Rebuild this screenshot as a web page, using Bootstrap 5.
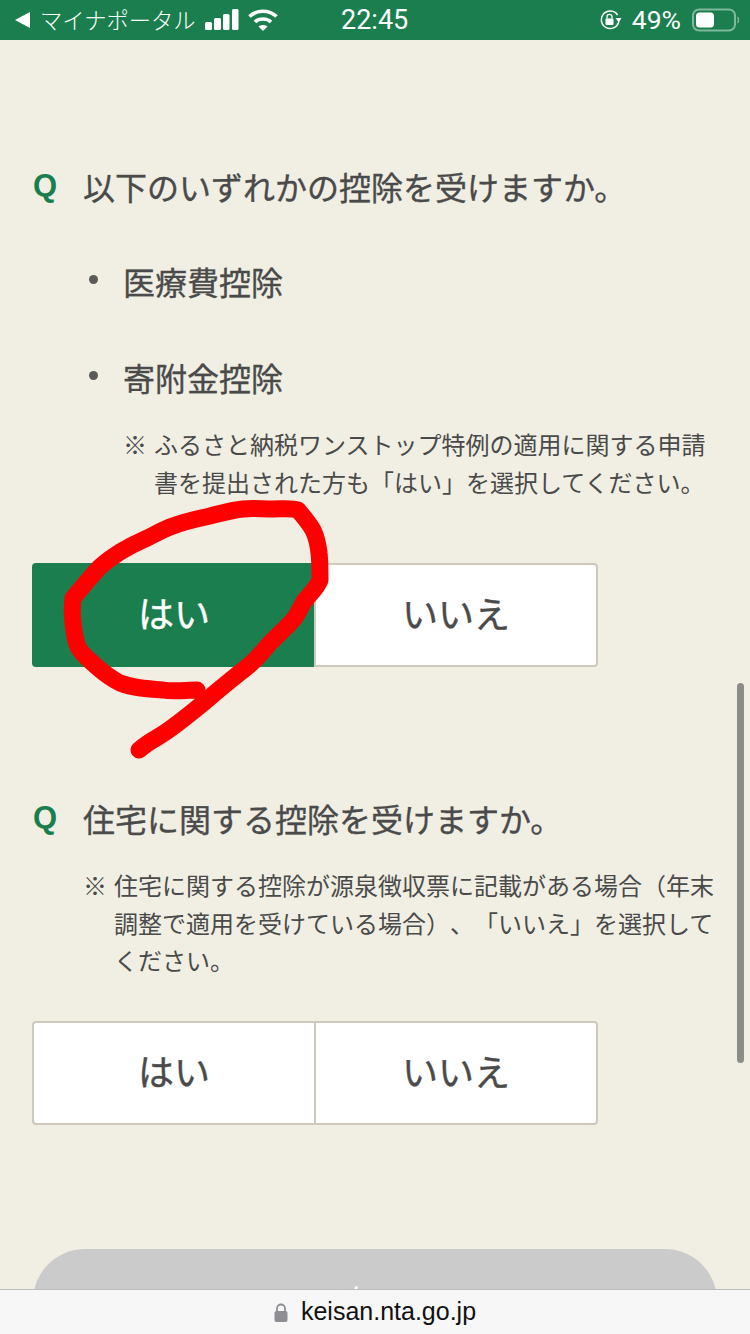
<!DOCTYPE html>
<html lang="ja">
<head>
<meta charset="utf-8">
<title>keisan.nta.go.jp</title>
<link href="https://cdn.jsdelivr.net/npm/bootstrap@5.3.0/dist/css/bootstrap.min.css" rel="stylesheet">
<style>
html,body{margin:0;padding:0}
body{width:750px;height:1334px;overflow:hidden;background:#f1efe3;font-family:"Noto Sans CJK JP","Liberation Sans",sans-serif;color:#4a4a4a;text-spacing-trim:space-all;font-feature-settings:"chws" 0,"palt" 0}
.screen{width:750px;height:1334px;overflow:hidden}
.statusbar{height:40px;background:#1a7e4e;color:#fff;font-family:Roboto,"Liberation Sans",sans-serif;flex:none}
.st-left{width:341px;padding-left:15px;font-size:22.300px;gap:9px;font-family:"Noto Sans CJK JP",sans-serif;font-weight:300}
.st-time{width:68px;font-size:27px;font-weight:400;white-space:nowrap;line-height:1}
.st-right{flex:1;font-size:26.500px;padding-right:10px;line-height:1}
.st-right .pct{margin:0 3px 0 2px}
.main{flex:1;min-height:0;padding:0 32px;overflow:hidden}
.q-line{margin:123px 0 0;font-size:32px;line-height:46px;font-weight:400;-webkit-text-stroke:.35px #4a4a4a;white-space:nowrap}
.q-mark{font-family:"Liberation Sans",sans-serif;font-weight:700;color:#1a7e4e;width:51px;font-size:31px;flex:none;padding-left:1px;-webkit-text-stroke:0}
.bul-list{list-style:none;margin:0;padding:0 0 0 91px;font-size:32px;line-height:46px;font-weight:400;-webkit-text-stroke:.35px #4a4a4a}
.bul-list li{position:relative;margin-top:50px}
.bul-list li:first-child{margin-top:49px}
.bul-list li::before{content:"";position:absolute;left:-34px;top:17px;width:9px;height:9px;border-radius:50%;background:#5a5a5a}
.note{font-size:24px;line-height:37.500px;display:flex;font-weight:400}
.note-a{padding-left:91px;margin:25px 0 0 0}
.note-b{padding-left:51px;margin:25px 0 0 0}
.note-k{width:31px;flex:none}
.yesno{width:566px;height:104px}
.yn-btn{height:104px;border:2px solid #cfc9bd;background:#fff;color:#4a4a4a;font-size:36px;font-weight:400;-webkit-text-stroke:.4px #4a4a4a;border-radius:0;padding:0 0 6px;line-height:1}
.yn-btn:first-child{border-radius:4px 0 0 4px;border-right-width:0;flex:0 0 282px}
.yn-btn:last-child{border-radius:0 4px 4px 0;flex:0 0 284px}
.yn-btn.on{background:#1a7e4e;border-color:#1a7e4e;color:#fff;-webkit-text-stroke:.4px #fff}
.yn-a{margin-top:63px}
.q-b{margin-top:128px}
.yn-b{margin-top:42px}
.next{height:120px;margin:124px 0 0 1px;width:684px;background:#cbcbcb;border-radius:52px;color:#fff;font-size:36px;text-align:center;line-height:104px}
.addr{height:45px;flex:none;background:#f7f7f7;border-top:1px solid #bdbdbd;color:#111;font-family:"Liberation Sans",sans-serif;font-size:25px;gap:13px;position:relative}
.scrollthumb{position:absolute;left:737px;top:683px;width:7px;height:380px;border-radius:4px;background:#8c8c88}
.scribble{position:absolute;left:0;top:0;pointer-events:none}
</style>
</head>
<body>
<div class="screen d-flex flex-column position-relative">
  <div class="statusbar d-flex align-items-center">
    <div class="st-left d-flex align-items-center">
      <svg width="16" height="16" viewBox="0 0 16 16"><path d="M0 8 15 0V16Z" fill="#fff"/></svg>
      <span>マイナポータル</span>
      <svg width="34" height="22" viewBox="0 0 34 22" fill="#fff"><rect x="0" y="13" width="7" height="8" rx="1.500"/><rect x="9" y="9" width="7" height="12" rx="1.500"/><rect x="18" y="5" width="6.500" height="16" rx="1.500"/><rect x="27" y="0" width="6.500" height="21" rx="1.500"/></svg>
      <svg width="30" height="22" viewBox="0 0 30 22" fill="none" stroke="#fff" stroke-width="3.600" stroke-linecap="butt"><path d="M1.500 7.500C9 .5 21 .5 28.500 7.500"/><path d="M7 13C11 9 19 9 23 13"/><path d="M15 22 10.500 17.500C13 15.500 17 15.500 19.500 17.500Z" fill="#fff" stroke="none"/></svg>
    </div>
    <div class="st-time">22:45</div>
    <div class="st-right d-flex align-items-center justify-content-end gap-2">
      <svg width="22" height="20" viewBox="0 0 22 20" fill="none"><path d="M17.600 5A8.800 8.800 0 1 0 18.800 11.500" stroke="#fff" stroke-width="1.500"/><path d="M15.500 8 21.500 8 18.800 12.500Z" fill="#fff"/><rect x="5.500" y="8.500" width="8" height="6.500" rx="1" fill="#fff"/><path d="M7 8.500V6.800A2.500 2.500 0 0 1 12 6.800V8.500" stroke="#fff" stroke-width="1.300"/></svg>
      <span class="pct">49%</span>
      <svg width="48" height="24" viewBox="0 0 48 24" fill="none"><rect x="1" y="1.500" width="42" height="21" rx="6" stroke="#7fb89c" stroke-width="2"/><rect x="4" y="4.500" width="18" height="15" rx="3.500" fill="#fff"/><path d="M45.500 9C46.800 10 46.800 14 45.500 15" stroke="#7fb89c" stroke-width="1.500"/></svg>
    </div>
  </div>

  <div class="main">
    <div class="q-line d-flex"><span class="q-mark">Q</span><span>以下のいずれかの控除を受けますか。</span></div>
    <ul class="bul-list">
      <li>医療費控除</li>
      <li>寄附金控除</li>
    </ul>
    <div class="note note-a"><span class="note-k">※</span><span>ふるさと納税ワンストップ特例の適用に関する申請書を提出された方も「はい」を選択してください。</span></div>
    <div class="yesno yn-a d-flex">
      <button type="button" class="btn yn-btn on">はい</button>
      <button type="button" class="btn yn-btn">いいえ</button>
    </div>

    <div class="q-line q-b d-flex"><span class="q-mark">Q</span><span>住宅に関する控除を受けますか。</span></div>
    <div class="note note-b"><span class="note-k">※</span><span>住宅に関する控除が源泉徴収票に記載がある場合（年末調整で適用を受けている場合）、「いいえ」を選択してください。</span></div>
    <div class="yesno yn-b d-flex">
      <button type="button" class="btn yn-btn">はい</button>
      <button type="button" class="btn yn-btn">いいえ</button>
    </div>
    <div class="next">次へ</div>
  </div>

  <div class="addr d-flex align-items-center justify-content-center">
    <svg width="14" height="19" viewBox="0 0 14 19" fill="none"><path d="M3 9V5.500A4 4 0 0 1 11 5.500V9" stroke="#8e8e93" stroke-width="1.800"/><rect x="0.500" y="8" width="13" height="11" rx="2" fill="#8e8e93"/></svg>
    <span>keisan.nta.go.jp</span>
  </div>

  <div class="scrollthumb"></div>
  <svg class="scribble" width="750" height="1334" viewBox="0 0 750 1334" fill="none"><path d="M139 750C146 744 151 741 158 737C172 729 190 714 207 700C218 690 232 679 247 667C256 660 264 650 270 643C278 635 286 628 293 620C297 616 300 609 303 603C309 594 316 590 320 580C320 566 320 560 319 553C318 544 316 536 313 530C309 523 303 516 298 510C292 508 283 509 273 509C262 509 252 508 243 509C232 510 222 513 210 516C196 519 183 522 170 527C160 531 152 536 143 540C134 544 128 547 120 552C111 558 103 563 97 570C89 579 80 590 73 598C72 606 72 614 73 623C74 632 75 640 78 647C82 655 90 660 97 667C104 673 112 679 120 683C133 688 148 689 163 690C174 692 186 690 197 690" stroke="#ff0000" stroke-width="17" stroke-linecap="round" stroke-linejoin="round"/></svg>
</div>
</body>
</html>
